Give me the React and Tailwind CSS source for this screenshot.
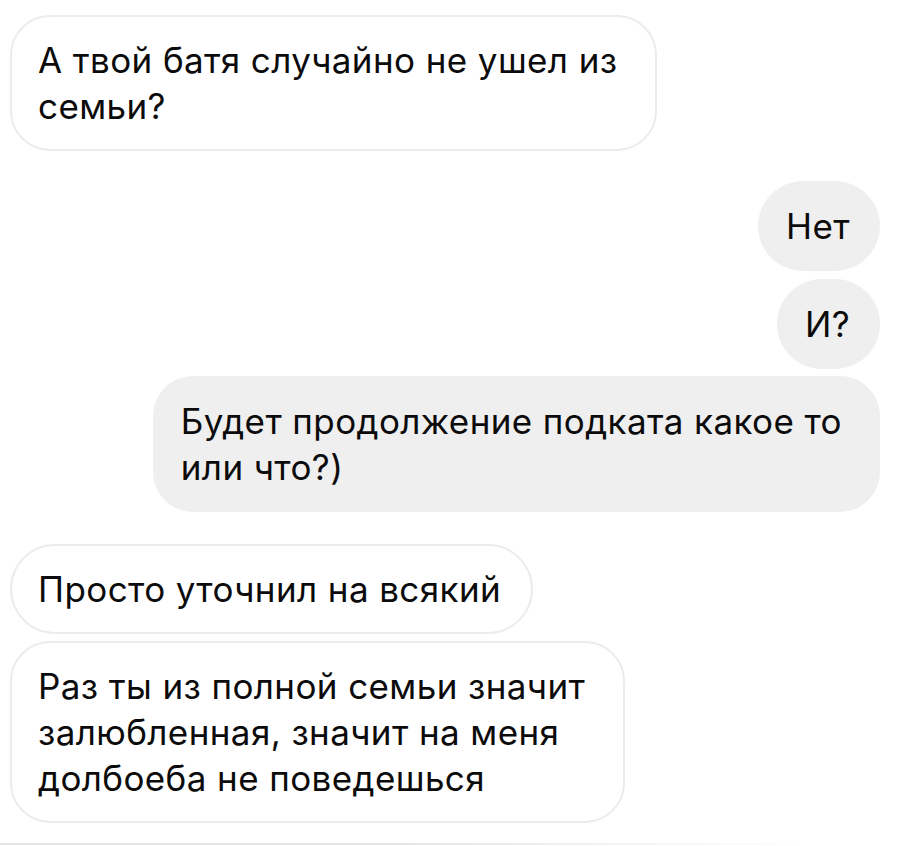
import React from "react";

const messages = [
  { side: "left", lines: ["А твой батя случайно не ушел из", "семьи?"], mt: "mt-0" },
  { side: "right", lines: ["Нет"], mt: "mt-[30px]" },
  { side: "right", lines: ["И?"], mt: "mt-[8px]" },
  { side: "right", lines: ["Будет продолжение подката какое то", "или что?)"], mt: "mt-[7px]" },
  { side: "left", lines: ["Просто уточнил на всякий"], mt: "mt-[32px]" },
  {
    side: "left",
    lines: ["Раз ты из полной семьи значит", "залюбленная, значит на меня", "долбоеба не поведешься"],
    mt: "mt-[7px]",
  },
];

const Bubble = ({ side, lines, mt }) => {
  const single = lines.length === 1;
  const base = side === "left"
    ? "bg-white border-2 border-[#ececec] self-start py-[20px] pl-[26px]"
    : "bg-[#efefef] self-end py-[22px] pl-[28px]";
  return (
    <div
      className={`${mt} ${base} ${single ? "rounded-full pr-[30px]" : "rounded-[40px] pr-[38px]"} text-[35px] leading-[46px] tracking-[0.4px] text-[#0b0b0b]`}
    >
      {lines.map((l, i) => (
        <div key={i} className="whitespace-nowrap">{l}</div>
      ))}
    </div>
  );
};

export default function App() {
  return (
    <div
      className="w-[900px] h-[846px] bg-white flex flex-col pt-[15px] pl-[10px] pr-[20px] overflow-hidden"
      style={{ fontFamily: "Inter, Roboto, 'Liberation Sans', sans-serif" }}
    >
      {messages.map((m, i) => (
        <Bubble key={i} {...m} />
      ))}
      <div className="mt-auto mb-[1px] h-[2px] w-[810px] -ml-[10px] bg-gradient-to-r from-[#e6e6e6] via-[#e6e6e6] to-white" />
    </div>
  );
}
